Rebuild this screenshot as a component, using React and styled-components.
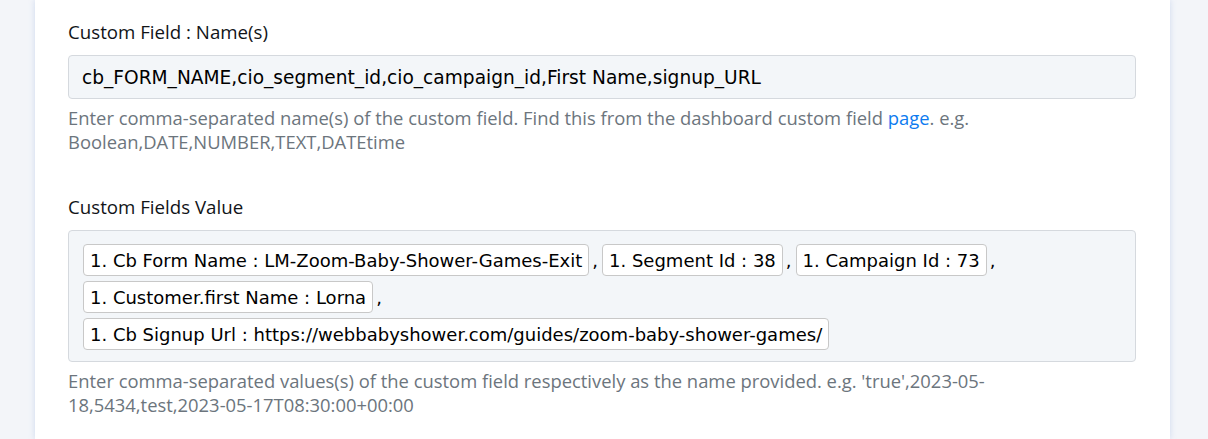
import styled, { createGlobalStyle } from 'styled-components'

const GlobalStyle = createGlobalStyle`
  body {
    margin: 0;
    background: #f3f5f9;
    font-family: "Open Sans", sans-serif;
  }
`;

const fieldValues = [
  '1. Cb Form Name : LM-Zoom-Baby-Shower-Games-Exit',
  '1. Segment Id : 38',
  '1. Campaign Id : 73',
  '1. Customer.first Name : Lorna',
  '1. Cb Signup Url : https://webbabyshower.com/guides/zoom-baby-shower-games/',
];

function App() {
  return (
    <Page>
      <GlobalStyle />
      <Card>
        <Group>
          <Label>Custom Field : Name(s)</Label>
          <TextInput>cb_FORM_NAME,cio_segment_id,cio_campaign_id,First Name,signup_URL</TextInput>
          <Help>
            Enter comma-separated name(s) of the custom field. Find this from the dashboard custom field <Link href="#">page</Link>. e.g. Boolean,DATE,NUMBER,TEXT,DATEtime
          </Help>
        </Group>
        <Group>
          <Label>Custom Fields Value</Label>
          <TagBox>
            {fieldValues.map((v, i) => (
              <TagItem key={i}>
                <Tag>{v}</Tag>
                {i < fieldValues.length - 1 && <Comma>,</Comma>}
              </TagItem>
            ))}
          </TagBox>
          <Help>
            Enter comma-separated values(s) of the custom field respectively as the name provided. e.g. 'true',2023-05-18,5434,test,2023-05-17T08:30:00+00:00
          </Help>
        </Group>
      </Card>
    </Page>
  )
}

export default App

const Page = styled.div`
  height: 439px;
  overflow: hidden;
  padding-left: 35px;
`;
const Card = styled.div`
  width: 1135px;
  height: 100%;
  box-sizing: border-box;
  background: #fff;
  padding: 20px 34px 0 33px;
  box-shadow: 0 0 6px rgba(140, 165, 220, 0.35);
  display: flex;
  flex-direction: column;
  gap: 41px;
`;
const Group = styled.div`
  display: flex;
  flex-direction: column;
`;
const Label = styled.label`
  font-size: 18.7px;
  line-height: 24px;
  color: #111418;
  margin-bottom: 11px;
`;
const TextInput = styled.div`
  height: 44px;
  box-sizing: border-box;
  background: #f3f6f9;
  border: 1px solid #d5d9de;
  border-radius: 4px;
  padding: 0 13px;
  display: flex;
  align-items: center;
  font-family: "DejaVu Sans", Verdana, sans-serif;
  font-size: 18.6px;
  color: #000;
`;
const Help = styled.p`
  margin: 7px 0 0;
  font-size: 18.4px;
  line-height: 24px;
  color: #6c757d;
`;
const Link = styled.a`
  color: #0d7bf0;
  text-decoration: none;
`;
const TagBox = styled.div`
  box-sizing: border-box;
  background: #f3f6f9;
  border: 1px solid #d5d9de;
  border-radius: 4px;
  padding: 13px 22px 11px 14px;
  display: flex;
  flex-wrap: wrap;
  row-gap: 5px;
`;
const TagItem = styled.span`
  display: inline-flex;
  align-items: center;
`;
const Tag = styled.span`
  height: 32px;
  box-sizing: border-box;
  display: inline-flex;
  align-items: center;
  padding: 0 6px;
  background: #fff;
  border: 1px solid #c8c8c8;
  border-radius: 4px;
  font-family: "DejaVu Sans", Verdana, sans-serif;
  font-size: 18px;
  color: #000;
`;
const Comma = styled.span`
  font-family: "DejaVu Sans", Verdana, sans-serif;
  font-size: 18px;
  margin: 0 4px 0 3px;
  align-self: flex-end;
  padding-bottom: 5px;
`;
